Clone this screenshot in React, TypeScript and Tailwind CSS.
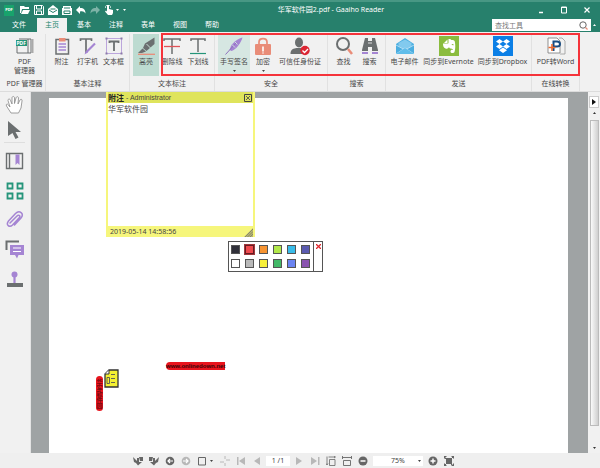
import type { ReactNode } from "react";

function Icon({ className = "size-5", box = "0 0 20 20", children }: { className?: string; box?: string; children: ReactNode }) {
  return (
    <svg className={`block shrink-0 ${className}`} viewBox={box} fill="none" aria-hidden="true">
      {children}
    </svg>
  );
}

const GREY = "#6b6f70";
const PURPLE = "#a585d3";
const CORAL = "#e98c78";
const GREEN = "#25957a";

const icons = {
  pdf: (
    <Icon>
      <path d="M4 3h9v14H2V9M13 3h3v14h-3" stroke={GREY} />
      <path d="M17 3v14h1.500V3z" fill="#aaa" />
      <rect x="1" y="4" width="11" height="6" fill={GREEN} />
      <text x="1.500" y="9" fontSize="5" fontWeight="bold" fill="#fff">PDF</text>
    </Icon>
  ),
  note: (
    <Icon>
      <rect x="4" y="3.500" width="12.500" height="14.500" stroke={GREY} strokeWidth="1.500" />
      <rect x="7" y="2" width="6.500" height="3.500" fill={CORAL} />
      <path d="M6.500 8h7.500M6.500 11h7.500M6.500 14h7.500" stroke={PURPLE} strokeWidth="1.500" />
    </Icon>
  ),
  typewriter: (
    <Icon>
      <path d="M2.500 5V3h11v2M8 3v14" stroke={GREY} strokeWidth="1.700" />
      <path d="M17 7.500 8.500 16" stroke={PURPLE} strokeWidth="2.200" />
      <path d="m8 14.500-1.500 4 3.500-2z" fill={PURPLE} />
    </Icon>
  ),
  textbox: (
    <Icon>
      <path d="M2.500 2.500h15v15h-15z" stroke={PURPLE} strokeWidth=".7" />
      <path d="M1.500 1.500h2V3.500h-2zM16.500 1.500h2V3.500h-2zM1.500 16.500h2v2h-2zM16.500 16.500h2v2h-2z" fill="#8b7ba8" />
      <path d="M5.500 7V5.500h9V7M10 5.500V15" stroke={GREY} strokeWidth="1.800" />
    </Icon>
  ),
  highlight: (
    <Icon>
      <path d="M18.500 1.500 9 7.500 7 12l3.500 3 8-7z" fill={GREY} />
      <path d="m6.500 12.500 3.500 3-4 1.500H2z" fill={GREY} />
      <path d="m10.500 8 4 4" stroke="#c6ded5" />
      <path d="M2 18.300h17" stroke={CORAL} strokeWidth="1.300" />
    </Icon>
  ),
  strike: (
    <Icon>
      <path d="M2 5V3h16v2M10 3v15" stroke={GREY} strokeWidth="1.500" />
      <path d="M2 10.500h16" stroke="#df5358" strokeWidth="1.300" />
    </Icon>
  ),
  underline: (
    <Icon>
      <path d="M3 5V3h14v2M10 3v13" stroke={GREY} strokeWidth="1.500" />
      <path d="M2 17.500h16" stroke={GREEN} strokeWidth="1.200" />
    </Icon>
  ),
  sign: (
    <Icon>
      <path d="M18.500 1.500c-2 0-9 4-11.500 8.500l-1.500 4 2 1C12 14 17.500 6 18.500 1.500z" fill={PURPLE} />
      <path d="M1.500 18.500 12 7" stroke="#8f70bd" />
      <path d="m8 8.500 3 3M11 6l2.500 2.500" stroke="#d6e7e2" strokeWidth=".9" />
    </Icon>
  ),
  lock: (
    <Icon>
      <path d="M6 9V6c0-4.500 8-4.500 8 0v3" stroke={CORAL} strokeWidth="1.700" />
      <rect x="2" y="8" width="16" height="11" rx="1" fill={CORAL} />
      <path d="M10 10.500v5M10 16.500v1" stroke="#fff" strokeWidth="1.600" />
    </Icon>
  ),
  identity: (
    <Icon>
      <ellipse cx="9" cy="6.500" rx="4" ry="5" fill={GREY} />
      <path d="M.5 18c0-5 3.500-5.500 6-6h5c3 .5 5 2 5 6z" fill={GREY} />
      <circle cx="15" cy="14.500" r="4.700" fill="#dc2633" />
      <path d="m12.500 14.500 2 2 3.500-3.500" stroke="#fff" strokeWidth="1.300" />
    </Icon>
  ),
  find: (
    <Icon>
      <circle cx="9" cy="8" r="6" stroke={GREY} strokeWidth="2" />
      <path d="m14 13 4 5" stroke={CORAL} strokeWidth="2.500" />
    </Icon>
  ),
  binoculars: (
    <Icon>
      <path d="M5 2h3v3h4V2h3l1 4 2 8v1h-6v-4H8v4H2v-1l2-8z" fill={GREY} />
      <path d="M8 7h4" stroke="#ddd" />
      <path d="M2 16h6v2H2zM12 16h6v2h-6z" fill={PURPLE} />
    </Icon>
  ),
  mail: (
    <Icon>
      <path d="m1 8 9-6 9 6v10H1z" fill="#4caee0" />
      <path d="m3.500 7 6.500-3.500L16.500 7v3L10 14l-6.500-4z" fill="#82caee" />
      <path d="m1 18 9-6 9 6M1 9l9 5 9-5" stroke="#d7effa" strokeWidth=".7" />
      <path d="m1 18 9-6 9 6z" fill="#5fbdea" />
    </Icon>
  ),
  evernote: (
    <Icon>
      <path d="M0 0h20v20H0z" fill="#8abc3e" />
      <path d="M8.500 3.500v3.500H5zM9.500 3c1.500-.3 2.500.3 3 1 1.500 0 3 .3 3.300 1.500.7 3.500.7 7.500-.3 10.500-.7 1.500-4 1.500-4-.5 0-1.700 1.500-2 2.500-1.500 0-1-1-1.300-2-1.500-1 0-1.700-.5-2-1.500-.7 1.700-2 2-3.500 1.500-2-.5-2.500-2.500-2.500-5h4.500c1 0 1-.5 1-1z" fill="#fff" />
      <path d="M12.500 9c.5-1.200 2-1.200 2.300.2z" fill="#8abc3e" />
    </Icon>
  ),
  dropbox: (
    <Icon>
      <path d="M0 0h20v20H0z" fill="#0b7fe6" />
      <path d="m6.500 3 3.500 2.500L6.500 8 3 5.500zM13.500 3 17 5.500 13.500 8 10 5.500zM6.500 8l3.500 2.500L6.500 13 3 10.500zM13.500 8l3.500 2.500-3.500 2.500-3.500-2.500zM10 11.500l4 2.700-4 2.800-4-2.800z" fill="#fff" />
    </Icon>
  ),
  word: (
    <Icon>
      <path d="M2 2h9l3 3v12H2z" fill="#fff" stroke="#777" strokeWidth=".8" />
      <path d="M13 2h3l3 3v13h-5" stroke="#999" strokeWidth=".8" />
      <path d="M7.500 15V5.500h3.500c4 0 4 5 0 5H7.500" stroke="#194d83" strokeWidth="2" />
      <path d="M2.500 11.500h7M6 8v7" stroke="#ed6c30" strokeWidth="1.600" />
    </Icon>
  ),
};

type Tool = { icon: ReactNode; label: string; width: string; tint?: string; menu?: boolean; lines?: boolean };

const groups: { name: string; width: string; tools: Tool[] }[] = [
  { name: "PDF 管理器", width: "w-[46px] pl-1", tools: [{ icon: icons.pdf, label: "PDF 管理器", width: "w-7", lines: true }] },
  {
    name: "基本注释",
    width: "w-[84px]",
    tools: [
      { icon: icons.note, label: "附注", width: "w-[26px]" },
      { icon: icons.typewriter, label: "打字机", width: "w-[26px]" },
      { icon: icons.textbox, label: "文本框", width: "w-[26px]" },
    ],
  },
  {
    name: "文本标注",
    width: "w-[85px]",
    tools: [
      { icon: icons.highlight, label: "高亮", width: "w-[26px]", tint: "bg-[#bddbd1]" },
      { icon: icons.strike, label: "删除线", width: "w-[26px]" },
      { icon: icons.underline, label: "下划线", width: "w-[26px]" },
    ],
  },
  {
    name: "安全",
    width: "w-[113px]",
    tools: [
      { icon: icons.sign, label: "手写签名", width: "w-8", tint: "bg-[#d6e7e2]", menu: true },
      { icon: icons.lock, label: "加密", width: "w-[26px]", menu: true },
      { icon: icons.identity, label: "可信任身份证", width: "w-12" },
    ],
  },
  {
    name: "搜索",
    width: "w-[58px]",
    tools: [
      { icon: icons.find, label: "查找", width: "w-[26px]" },
      { icon: icons.binoculars, label: "搜索", width: "w-[26px]" },
    ],
  },
  {
    name: "发送",
    width: "w-[146px]",
    tools: [
      { icon: icons.mail, label: "电子邮件", width: "w-8" },
      { icon: icons.evernote, label: "同步到Evernote", width: "w-14" },
      { icon: icons.dropbox, label: "同步到Dropbox", width: "w-[52px]" },
    ],
  },
  { name: "在线转换", width: "w-12", tools: [{ icon: icons.word, label: "PDF转Word", width: "w-11" }] },
];

function Caret({ className = "" }: { className?: string }) {
  return (
    <Icon className={`h-[2px] w-[3px] ${className}`} box="0 0 3 2">
      <path d="M0 0h3L1.500 2z" fill="currentColor" />
    </Icon>
  );
}

const quick: { name: string; art: ReactNode; dim?: boolean }[] = [
  { name: "打开", art: <path d="M0 1h4l1 1h4v2H2L1 8H0zM3 5h7L8 9H1z" fill="#fff" /> },
  { name: "保存", art: <><path d="M.5.500h8l1 1v8h-9z" stroke="#fff" /><path d="M2.500 1v3h5V1M2.500 9V6h5v3" stroke="#fff" /></> },
  { name: "邮件", art: <><path d="m0 4 5-4 5 4v6H0z" fill="#fff" /><path d="m1 5 4 2.500L9 5M2.500 4h5" stroke="#27806c" /></> },
  { name: "打印", art: <><path d="M1 1h8v2h1v7H0V3h1z" fill="#fff" /><path d="M2 3h6M2 8.500V6h6v2.500z" stroke="#27806c" /></> },
  { name: "撤销", art: <path d="m0 5 4-4v2c4 0 5.500 2 5.500 5.500C8 6.500 7 6 4 6.500V9z" fill="#fff" /> },
  { name: "重做", dim: true, art: <path d="M10 5 6 1v2C2 3 .5 5 .5 8.500 2 6.500 3 6 6 6.500V9z" fill="#fff" /> },
  { name: "触摸模式", art: <><path d="M3 0h2v4l4 1v3L8 10H4L1 6.500l1-1 1 1z" fill="#fff" /><path d="M1.500 3c-1-4 6-4 5 0" stroke="#fff" strokeWidth=".7" /></> },
];

function TitleBar() {
  return (
    <header className="flex h-[18px] items-center border-t-2 border-[#489784] pl-1 text-white">
      <span className="mr-1 flex h-[11px] w-[10px] items-center justify-center bg-[#18a36c] text-[4px] leading-none font-bold">PDF</span>
      <div className="flex items-center">
        {quick.map((q) => (
          <button key={q.name} aria-label={q.name} className="flex h-3 w-[14px] items-center justify-center">
            <Icon className={q.dim ? "size-[10px] opacity-40" : "size-[10px]"} box="0 0 10 10">{q.art}</Icon>
          </button>
        ))}
        <Caret />
        <Caret className="ml-1" />
      </div>
      <h1 className="flex-1 truncate text-center text-[7px] leading-3">华军软件园2.pdf - Gaaiho Reader</h1>
      <div className="flex w-16 justify-between pr-2">
        <button aria-label="最小化"><Icon className="size-[10px]" box="0 0 10 10"><path d="M3 7.500h4" stroke="#fff" strokeWidth="1.500" /></Icon></button>
        <button aria-label="最大化"><Icon className="size-[10px]" box="0 0 10 10"><path d="M2.500 2v6h5V2zM2 2.500h6" stroke="#fff" /></Icon></button>
        <button aria-label="关闭"><Icon className="size-[10px]" box="0 0 10 10"><path d="m2.500 2.500 5 5m0-5-5 5" stroke="#fff" strokeWidth="1.200" /></Icon></button>
      </div>
    </header>
  );
}

function TabBar() {
  return (
    <div className="flex h-[14px] items-stretch pl-[3px] text-white">
      <nav className="flex">
        {["文件", "主页", "基本", "注释", "表单", "视图", "帮助"].map((t) => (
          <button
            key={t}
            className={t === "主页" ? "mr-px ml-0.5 w-[30px] bg-[#f1f1f1] text-[#22866e]" : "w-8"}
          >
            {t}
          </button>
        ))}
      </nav>
      <div className="ml-auto flex items-center gap-0.5 pr-1">
        <label className="flex h-[12px] w-[99px] items-center bg-white pr-[3px]">
          <input aria-label="查找工具" placeholder="查找工具" className="h-3 min-w-0 flex-1 pl-[3px] text-[7px] outline-none placeholder:text-[#777]" />
          <Icon className="size-[9px]" box="0 0 9 9">
            <circle cx="4" cy="4" r="3.200" stroke="#666" />
            <path d="m6.500 6.500 2 2" stroke={CORAL} strokeWidth="1.300" />
          </Icon>
        </label>
        <button aria-label="折叠功能区"><Caret className="rotate-180" /></button>
      </div>
    </div>
  );
}

function Ribbon() {
  return (
    <div className="relative flex h-[60px] overflow-hidden border-b border-[#dcdcdc] bg-[#f1f1f1] pt-0.5 text-[#484848]">
      {groups.map((g) => (
        <section key={g.name} className={`flex shrink-0 flex-col border-r border-[#e1e1e1] ${g.width}`}>
          <div className="flex justify-center">
            {g.tools.map((t) => (
              <button key={t.label} className={`flex h-[42px] shrink-0 flex-col items-center pt-0.5 ${t.width} ${t.tint ?? ""}`}>
                {t.icon}
                <span className={`mt-px leading-[9px] ${t.lines ? "w-6 break-keep" : "whitespace-nowrap"}`}>{t.label}</span>
                {t.menu && <Caret className="mt-1" />}
              </button>
            ))}
          </div>
          <h2 className="mt-[3px] text-center leading-[10px] whitespace-nowrap">{g.name}</h2>
        </section>
      ))}
      <div className="pointer-events-none absolute top-px left-[161px] h-[43px] w-[419px] border-2 border-[#f5333a]" />
    </div>
  );
}

const sideTools: { name: string; height: string; art: ReactNode }[] = [
  {
    name: "手形工具",
    height: "h-[26px]",
    art: <path d="M6 18 1.500 11c-1-2 1-2.500 2-1L5 12 3 5.500c0-2 2-2 2.500 0L7 9V3c0-2 2.500-2 2.500 0v5.500L11 3c.5-2 2.500-1.500 2.500 0L13 9l2-4c1-1.500 2.500-.5 2 1l-1 7-2.500 5z" fill="#fff" stroke="#888" strokeWidth=".8" />,
  },
  { name: "选择工具", height: "h-[25px] border-b border-[#dedede]", art: <path d="m3 1 13 11h-5.500l3 5.500-3 1.500-3-6L3 16z" fill={GREY} /> },
  {
    name: "书签",
    height: "h-9",
    art: <><path d="M1.500 2.500h16v15h-16zM4.500 3v14" stroke={GREY} strokeWidth="1.400" /><path d="M10.500 3.500h4V14l-2-2-2 2z" fill={PURPLE} /></>,
  },
  { name: "缩略图", height: "h-6", art: <path d="M2.500 2.500h5v5h-5zM12.500 2.500h5v5h-5zM2.500 12.500h5v5h-5zM12.500 12.500h5v5h-5z" stroke={GREEN} strokeWidth="1.800" /> },
  {
    name: "附件",
    height: "h-[34px]",
    art: <path d="m5 13 7-7c2-2 4 0 2 2l-6.500 7c-3 3-7 0-4-4l7-7.500c4-4 9 0 5.500 4.500l-6.500 7" stroke={PURPLE} strokeWidth="1.500" strokeLinecap="round" />,
  },
  {
    name: "批注",
    height: "h-[26px]",
    art: <><path d="M1.500 10V1.500H14" stroke={GREY} strokeWidth="2" /><path d="M5 5h14v10h-5.500L12 18.500 10 15H5z" fill={PURPLE} /><path d="M8 8h8M8 11.500h8" stroke="#fff" strokeWidth="1.200" /></>,
  },
  {
    name: "图章",
    height: "h-[34px]",
    art: <><circle cx="9.500" cy="4.500" r="3" fill={PURPLE} /><path d="M9.500 6v7" stroke={PURPLE} strokeWidth="2.200" /><path d="M2 13h16v4H2z" fill={GREY} /></>,
  },
];

function Sidebar() {
  return (
    <aside className="w-[31px] shrink-0 border-r border-[#e4e4e4] bg-[#f1f1f1] px-1">
      {sideTools.map((t) => (
        <button key={t.name} aria-label={t.name} className={`flex w-[21px] items-center justify-center ${t.height}`}>
          <Icon>{t.art}</Icon>
        </button>
      ))}
    </aside>
  );
}

function NotePopup() {
  return (
    <article className="absolute top-0 left-[75px] flex h-[145px] w-[149px] flex-col border-x-2 border-[#f6f67c] bg-white text-[#444]">
      <header className="flex h-[11px] items-center bg-[#dfe45c] pr-px text-[7px] leading-[10px] whitespace-nowrap">
        <b className="text-[8px] text-[#222]">附注</b>
        <span className="ml-0.5 font-['Liberation_Sans',sans-serif]">- Administrator</span>
        <button aria-label="关闭附注" className="ml-auto">
          <Icon className="size-[8px]" box="0 0 8 8"><path d="M.5.500h7v7h-7z" stroke="#444" /><path d="m2 2 4 4m0-4L2 6" stroke="#444" strokeWidth=".8" /></Icon>
        </button>
      </header>
      <p className="flex-1 text-[8px] leading-3">华军软件园</p>
      <footer className="flex h-[11px] items-center justify-between bg-[#f6f67c] pl-[2px] text-[7px] leading-[10px]">
        <time>2019-05-14 14:58:56</time>
        <Icon className="size-[9px] self-end" box="0 0 9 9"><path d="M9 0v9H0z" fill="#b9b86a" /><path d="m1 9 8-8M3.500 9 9 3.500M6 9l3-3" stroke="#777" strokeWidth=".8" /></Icon>
      </footer>
    </article>
  );
}

const swatches = [
  ["黑", "bg-[#30303a]"], ["红", "bg-[#f04a4e]"], ["橙", "bg-[#f79432]"], ["黄绿", "bg-[#b2e84a]"], ["天蓝", "bg-[#39bce9]"], ["靛", "bg-[#5b5bb0]"],
  ["白", "bg-white"], ["灰", "bg-[#b9b9b9]"], ["黄", "bg-[#f8f03a]"], ["绿", "bg-[#43b968]"], ["蓝", "bg-[#6b84f2]"], ["紫", "bg-[#8a54b0]"],
];

function Palette() {
  return (
    <div className="absolute top-[149px] left-[197px] flex h-[31px] w-[95px] border border-[#555] bg-white">
      <div className="grid flex-1 grid-cols-6 place-items-center py-px pr-px">
        {swatches.map(([name, color]) => (
          <button
            key={name}
            aria-label={name}
            className={`size-[9px] border ${name === "红" ? "border-[#661c22] outline outline-[#a0383c]" : "border-[#555]"} ${color}`}
          />
        ))}
      </div>
      <button aria-label="关闭调色板" className="flex w-[9px] justify-center border-l border-[#555] pt-0.5">
        <Icon className="size-[5px]" box="0 0 5 5"><path d="m0 0 5 5m0-5L0 5" stroke="#e0282e" strokeWidth="1.300" /></Icon>
      </button>
    </div>
  );
}

function Workspace() {
  return (
    <main className="relative min-h-0 flex-1 overflow-hidden bg-[#9fa3a4] pt-[6px] pr-5 pl-[18px]">
      <div className="h-full bg-white" />
      <NotePopup />
      <Palette />
      <span className="absolute top-[270px] left-[135px] rounded-l-sm bg-[#e8141d] font-['Liberation_Sans',sans-serif] text-[6px] leading-[8px] font-bold whitespace-nowrap text-[#3a0508]">
        www.onlinedown.net
      </span>
      <span className="absolute top-[284px] left-[65px] flex h-[35px] w-[7px] items-center justify-center rounded-sm bg-[#e8141d] font-['Noto_Sans_CJK_SC',sans-serif] text-[6px] leading-[7px] font-bold text-[#7a0a10] [writing-mode:vertical-rl]">
        华军软件园
      </span>
      <button aria-label="附注" className="absolute top-[277px] left-[73px]">
        <Icon className="h-[19px] w-[15px]" box="0 0 15 19">
          <path d="M5 1h9v17H1V5z" fill="#f4f032" stroke="#333" strokeWidth="1.300" />
          <path d="M5 1v4H1" fill="#fff" stroke="#333" />
          <path d="M7 5.500h4M7 9.500h4M7 13.500h4M3 8.500h2.500v6H3z" stroke="#555" strokeWidth=".9" />
        </Icon>
      </button>
    </main>
  );
}

function ScrollBar() {
  return (
    <div className="flex w-3 shrink-0 flex-col items-center bg-[#f1f1f1] pt-1 text-[#333]">
      <button aria-label="展开面板" className="mb-1 flex h-3 w-[10px] items-center justify-center border border-[#ccc] bg-white">
        <Icon className="h-[6px] w-1" box="0 0 4 6"><path d="M0 0v6l4-3z" fill="#111" /></Icon>
      </button>
      <button aria-label="向上滚动" className="flex h-2 items-start"><Caret className="rotate-180" /></button>
      <div className="w-[9px] flex-1 border border-[#bbb] bg-linear-to-r from-[#fafafa] to-[#cfcfcf]" />
      <button aria-label="向下滚动" className="flex h-[27px] items-end pb-1"><Caret /></button>
    </div>
  );
}

function StatusButton({ name, dim, children }: { name: string; dim?: boolean; children: ReactNode }) {
  return (
    <button aria-label={name} className={`flex w-4 items-center justify-center ${dim ? "text-[#b8b8b8]" : "text-[#666]"}`}>
      <Icon className="size-[10px]" box="0 0 10 10">{children}</Icon>
    </button>
  );
}

function StatusBar() {
  return (
    <footer className="flex h-[15px] items-center justify-center bg-[#efefef] pr-[13px] text-[#444]">
      <StatusButton name="首个视图"><path d="M0 1 4 5V2h2v4h3L5 9.500 3 7 1 6zM6 1h4v4H7z" fill="currentColor" /></StatusButton>
      <StatusButton name="末个视图"><path d="M10 1 6 5V2H4v4H1l4 3.500L7 7l2-1zM4 1H0v4h3z" fill="currentColor" /></StatusButton>
      <StatusButton name="上一视图"><circle cx="5" cy="5" r="4.300" fill="currentColor" /><path d="M8 5H3m2-2L3 5l2 2" stroke="#fff" strokeWidth="1.200" /></StatusButton>
      <StatusButton name="下一视图" dim><circle cx="5" cy="5" r="4.300" fill="currentColor" /><path d="M2 5h5M5 3l2 2-2 2" stroke="#fff" strokeWidth="1.200" /></StatusButton>
      <StatusButton name="页面布局"><path d="M1.500 1.500h7v7.500h-7z" stroke="currentColor" /></StatusButton>
      <Caret className="mr-1" />
      <StatusButton name="自动滚动" dim><path d="M5 0v3M5 7v3M0 6h4M6 4h4" stroke="currentColor" /></StatusButton>
      <StatusButton name="第一页" dim><path d="M1 1h1.500v8H1zM9 1v8L3 5z" fill="currentColor" /></StatusButton>
      <StatusButton name="上一页" dim><path d="M8 1v8L2 5z" fill="currentColor" /></StatusButton>
      <input aria-label="页码" defaultValue="1 /1" className="mx-px h-[10px] w-6 bg-white text-center text-[7px] outline-none" />
      <StatusButton name="下一页" dim><path d="M2 1v8l6-4z" fill="currentColor" /></StatusButton>
      <StatusButton name="最后一页" dim><path d="M8 1h1.500v8H8zM1 1v8l6-4z" fill="currentColor" /></StatusButton>
      <StatusButton name="适合页面"><path d="M3.500 3.500h5.500v6H3.500zM1 .5v8M0 7.500l1 1.500 1-1.500M2.500 1H9M8 0l1.500 1L8 2" stroke="currentColor" strokeWidth=".8" /></StatusButton>
      <StatusButton name="适合宽度"><path d="M1.500 4.500h7v5h-7zM.5 0v3M9.500 0v3M.5 1.500h9" stroke="currentColor" strokeWidth=".9" /></StatusButton>
      <StatusButton name="缩小"><circle cx="5" cy="5" r="4.500" fill="currentColor" /><path d="M2.500 5h5" stroke="#fff" strokeWidth="1.500" /></StatusButton>
      <div className="relative mx-0.5 flex items-center">
        <select aria-label="缩放" className="h-[10px] w-[50px] appearance-none bg-white text-[7px] leading-[10px] outline-none [text-align-last:center]">
          <option>75%</option>
        </select>
        <Caret className="pointer-events-none absolute right-0.5" />
      </div>
      <StatusButton name="放大"><circle cx="5" cy="5" r="4.500" fill="currentColor" /><path d="M2.500 5h5M5 2.500v5" stroke="#fff" strokeWidth="1.400" /></StatusButton>
      <StatusButton name="全屏"><path d="M0 0h3L0 3zM10 0H7l3 3zM0 10V7l3 3zM10 10V7l-3 3zM2 2h6v6H2z" fill="currentColor" /><path d="m0 1 9 9M10 0 0 10" stroke="currentColor" /></StatusButton>
    </footer>
  );
}

export default function App() {
  return (
    <div className="flex h-screen flex-col bg-[#27806c] font-['Noto_Sans','Noto_Sans_CJK_SC',sans-serif] text-[7px] leading-[10px]">
      <TitleBar />
      <TabBar />
      <Ribbon />
      <div className="flex min-h-0 flex-1">
        <Sidebar />
        <Workspace />
        <ScrollBar />
      </div>
      <StatusBar />
    </div>
  );
}
